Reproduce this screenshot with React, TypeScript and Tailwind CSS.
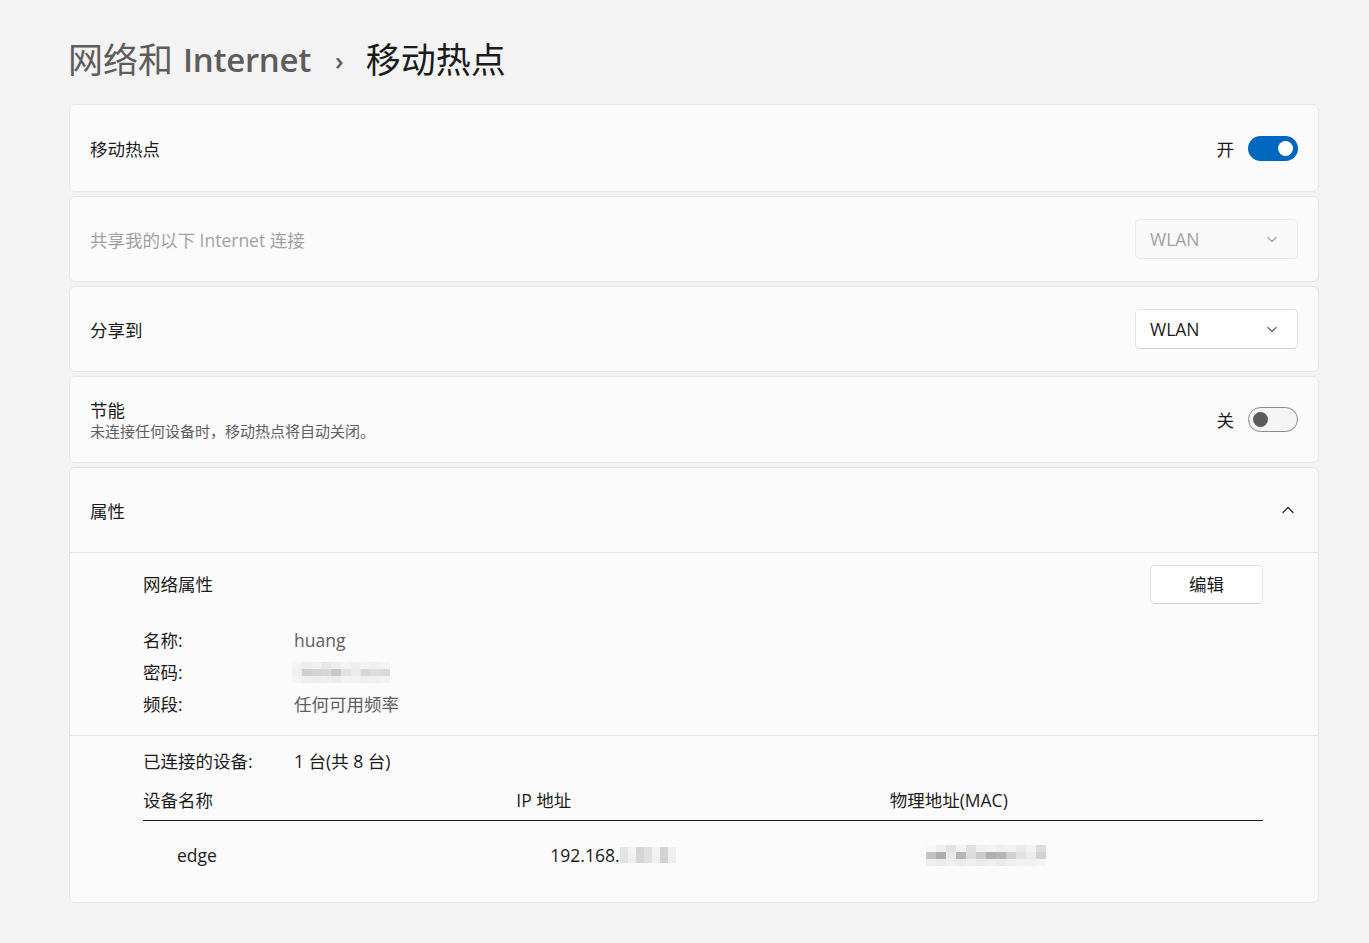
import React from "react";

const FONT = { fontFamily: '"Segoe UI", "Open Sans", "Noto Sans CJK SC", sans-serif' };

function Pixels({ w, h, cells, cols, rows }: { w: number; h: number; cells: string[]; cols: number; rows: number }) {
  const cw = w / cols;
  const ch = h / rows;
  return (
    <svg width={w} height={h} viewBox={`0 0 ${w} ${h}`} className="block">
      {cells.map((c, i) => (
        <rect key={i} x={(i % cols) * cw} y={Math.floor(i / cols) * ch} width={cw + 0.5} height={ch + 0.5} fill={c} />
      ))}
    </svg>
  );
}

function Chevron({ up = false, color = "#5f5f5f" }: { up?: boolean; color?: string }) {
  return (
    <svg width="14" height="14" viewBox="0 0 14 14" fill="none">
      <path d={up ? "M2 9.5 L7 4.5 L12 9.5" : "M3 5.5 L7 9.5 L11 5.5"} stroke={color} strokeWidth="1.2" strokeLinecap="round" strokeLinejoin="round" />
    </svg>
  );
}

function Toggle({ on }: { on: boolean }) {
  return on ? (
    <div className="w-[50px] h-[25px] rounded-full bg-[#0067c0] flex items-center justify-end pr-[5px]">
      <div className="w-[15px] h-[15px] rounded-full bg-white" />
    </div>
  ) : (
    <div className="w-[50px] h-[25px] rounded-full border border-[#8a8a8a] bg-[#f5f5f5] flex items-center pl-[4px]">
      <div className="w-[15px] h-[15px] rounded-full bg-[#5c5c5c]" />
    </div>
  );
}

function Dropdown({ disabled }: { disabled?: boolean }) {
  return (
    <div
      className={
        disabled
          ? "w-[163px] h-[40px] rounded-[5px] border border-[#ebebeb] bg-[#f9f9f9] flex items-center justify-between pl-[14px] pr-[18px] text-[#a1a1a1]"
          : "w-[163px] h-[40px] rounded-[5px] border border-[#e3e3e3] border-b-[#d0d0d0] bg-white flex items-center justify-between pl-[14px] pr-[18px] text-[#1b1b1b]"
      }
    >
      <span>WLAN</span>
      <Chevron color={disabled ? "#a1a1a1" : "#5f5f5f"} />
    </div>
  );
}

const pwCells = [
  "#f4f4f4", "#ececec", "#f1f1f1", "#e8e8e8", "#eeeeee", "#f4f4f4", "#ededed", "#f2f2f2", "#efefef", "#f4f4f4",
  "#efefef", "#cfcfcf", "#d3d3d3", "#d6d6d6", "#c8c8c8", "#e2e2e2", "#ebebeb", "#d8d8d8", "#dedede", "#dadada",
  "#f3f3f3", "#efefef", "#ececec", "#efefef", "#ebebeb", "#f2f2f2", "#f2f2f2", "#efefef", "#f0f0f0", "#f2f2f2",
];
const ipCells = [
  "#e4e4e4", "#f2f2f2", "#d4d4d4", "#e0e0e0", "#f2f2f2", "#d2d2d2", "#efefef",
  "#e2e2e2", "#efefef", "#d6d6d6", "#e0e0e0", "#efefef", "#d3d3d3", "#eeeeee",
];
const macCells = [
  "#f8f8f8", "#efefef", "#e2e2e2", "#f3f3f3", "#e0e0e0", "#f0f0f0", "#f3f3f3", "#efefef", "#f2f2f2", "#eaeaea", "#f2f2f2", "#dcdcdc",
  "#c2c2c2", "#aeaeae", "#e9e9e9", "#b6b6b6", "#dcdcdc", "#cacaca", "#b0b0b0", "#b5b5b5", "#cfcfcf", "#e2e2e2", "#ececec", "#d2d2d2",
  "#efefef", "#ebebeb", "#efefef", "#ebebeb", "#efefef", "#ebebeb", "#efefef", "#eaeaea", "#efefef", "#f2f2f2", "#f1f1f1", "#f4f4f4",
];

export default function App() {
  return (
    <div className="min-h-[943px] bg-[#f3f3f3] text-[#1b1b1b] text-[17.5px]" style={FONT}>
      <div className="pl-[69px] pr-[50px]">
        <div className="pt-[36px] h-[84px] mb-[20px] flex items-center text-[35px] leading-[48px]">
          <span className="text-[#5d5d5d] -ml-[1px]">网络和</span>
          <span className="text-[#5d5d5d] font-semibold text-[33px] ml-[10px] tracking-[-0.3px]">Internet</span>
          <span className="text-[#5d5d5d] text-[26px] ml-[24px] mr-[22px] font-semibold">›</span>
          <span className="text-[#1b1b1b]">移动热点</span>
        </div>

        <div className="flex flex-col gap-[4px]">
          <div className="h-[88px] rounded-[6px] border border-[#e5e5e5] bg-[#fbfbfb] flex items-center justify-between pl-[20px] pr-[20px]">
            <span className="pt-[2px]">移动热点</span>
            <div className="flex items-center gap-[14px]">
              <span className="pt-[2px]">开</span>
              <Toggle on />
            </div>
          </div>

          <div className="h-[86px] rounded-[6px] border border-[#e5e5e5] bg-[#fbfbfb] flex items-center justify-between pl-[20px] pr-[20px]">
            <span className="text-[#a1a1a1] pt-[2px]">共享我的以下 Internet 连接</span>
            <Dropdown disabled />
          </div>

          <div className="h-[86px] rounded-[6px] border border-[#e5e5e5] bg-[#fbfbfb] flex items-center justify-between pl-[20px] pr-[20px]">
            <span className="pt-[2px]">分享到</span>
            <Dropdown />
          </div>

          <div className="h-[87px] rounded-[6px] border border-[#e5e5e5] bg-[#fbfbfb] flex items-center justify-between pl-[20px] pr-[20px]">
            <div className="flex flex-col">
              <span className="leading-[22px]">节能</span>
              <span className="text-[15px] leading-[20px] text-[#5f5f5f]">未连接任何设备时，移动热点将自动关闭。</span>
            </div>
            <div className="flex items-center gap-[14px]">
              <span className="pt-[2px]">关</span>
              <Toggle on={false} />
            </div>
          </div>

          <div className="rounded-[6px] border border-[#e5e5e5] bg-[#fbfbfb]">
            <div className="h-[85px] border-b border-[#e5e5e5] flex items-center justify-between pl-[20px] pr-[23px]">
              <span className="pt-[2px]">属性</span>
              <Chevron up color="#1b1b1b" />
            </div>

            <div className="border-b border-[#e5e5e5] pl-[73px] pr-[55px] pt-[11px] pb-[15px]">
              <div className="h-[40px] flex items-center justify-between">
                <span>网络属性</span>
                <div className="w-[113px] h-[39px] rounded-[5px] border border-[#e3e3e3] border-b-[#d0d0d0] bg-white flex items-center justify-center">
                  编辑
                </div>
              </div>
              <div className="mt-[20px] flex flex-col">
                <div className="h-[32px] flex items-center">
                  <span className="w-[151px]">名称:</span>
                  <span className="text-[#5f5f5f]">huang</span>
                </div>
                <div className="h-[32px] flex items-center">
                  <span className="w-[149px]">密码:</span>
                  <Pixels w={98} h={21} cols={10} rows={3} cells={pwCells} />
                </div>
                <div className="h-[32px] flex items-center">
                  <span className="w-[151px]">频段:</span>
                  <span className="text-[#5f5f5f]">任何可用频率</span>
                </div>
              </div>
            </div>

            <div className="pl-[73px] pr-[55px] pt-[9px] pb-[31px]">
              <div className="h-[32px] flex items-center">
                <span className="w-[151px]">已连接的设备:</span>
                <span>1 台(共 8 台)</span>
              </div>
              <div className="mt-[7px] h-[37px] pb-[4px] border-b border-[#1b1b1b] grid grid-cols-3 items-center">
                <span>设备名称</span>
                <span>IP 地址</span>
                <span>物理地址(MAC)</span>
              </div>
              <div className="mt-[18px] h-[32px] grid grid-cols-3 items-center">
                <span className="pl-[34px]">edge</span>
                <div className="pl-[34px] flex items-center">
                  <span>192.168.</span>
                  <Pixels w={56} h={16} cols={7} rows={2} cells={ipCells} />
                </div>
                <div className="pl-[36px] flex items-center">
                  <Pixels w={120} h={21} cols={12} rows={3} cells={macCells} />
                </div>
              </div>
            </div>
          </div>
        </div>
      </div>
    </div>
  );
}
